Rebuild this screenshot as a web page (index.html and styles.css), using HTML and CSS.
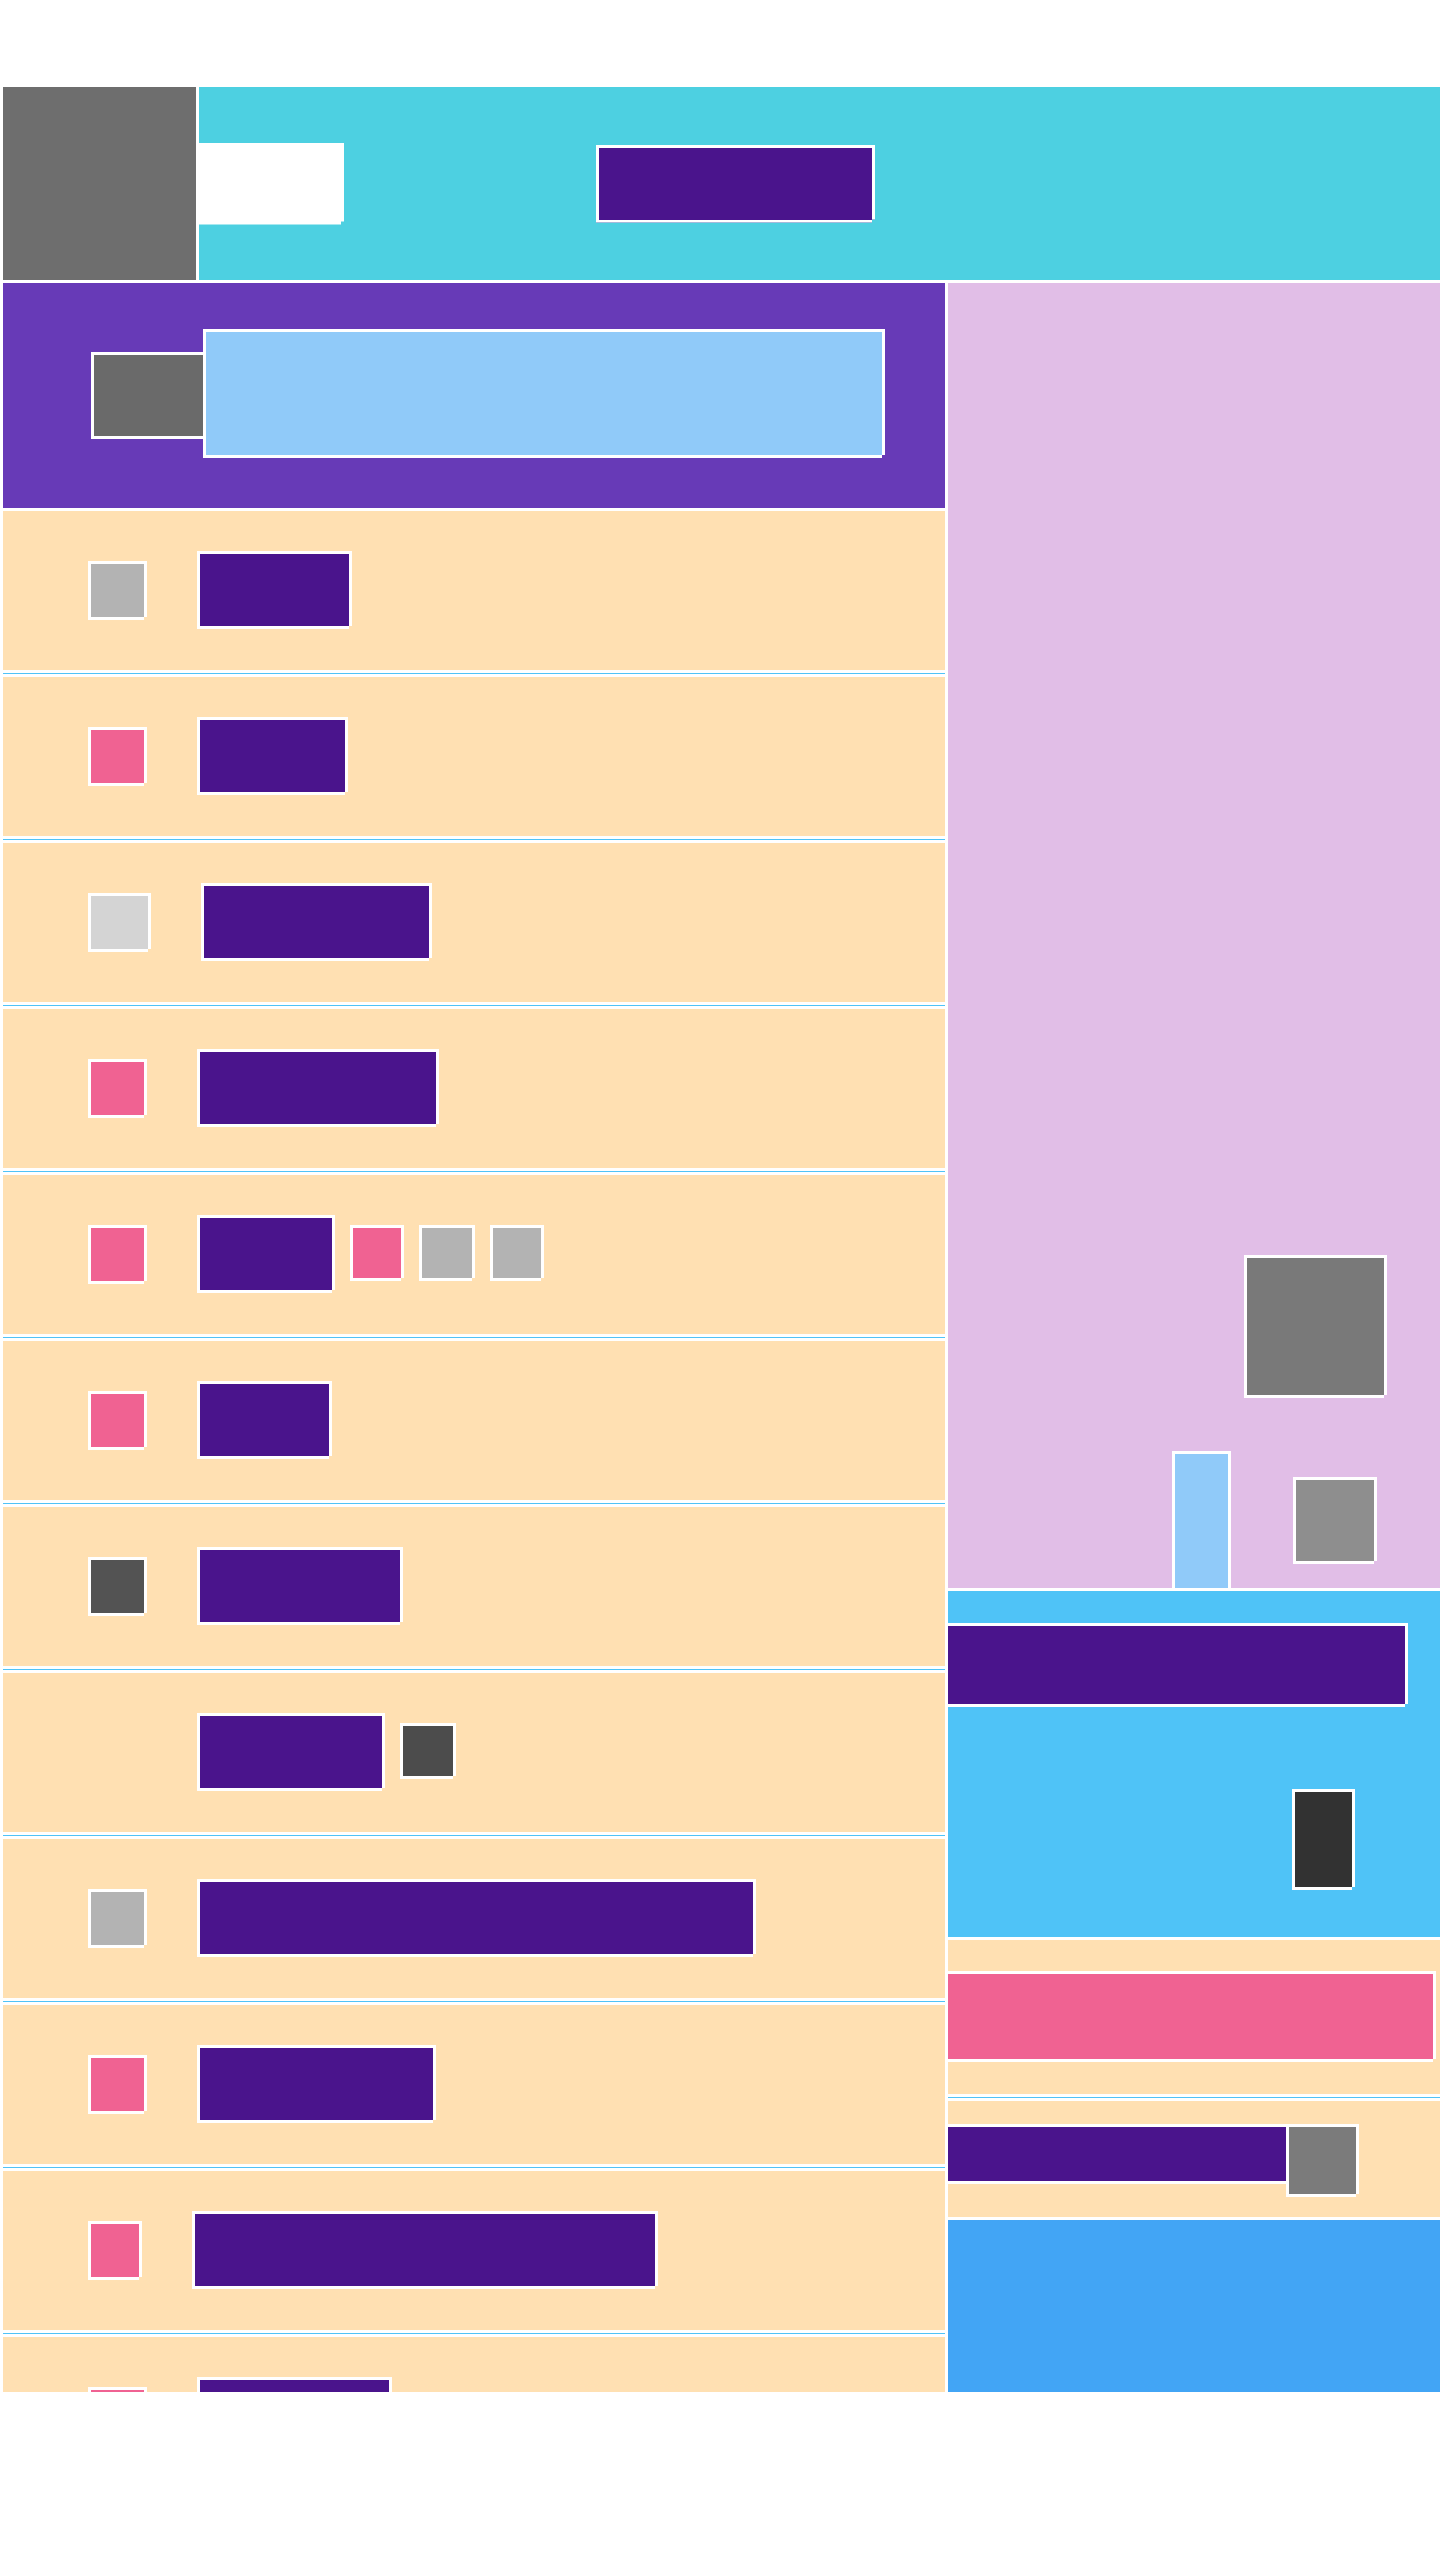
FILE: index.html
```html
<!DOCTYPE html>
<html lang="en">
<head>
<meta charset="utf-8">
<meta name="viewport" content="width=device-width, initial-scale=1">
<title>Layout blocks</title>
<link rel="stylesheet" href="styles.css">
</head>
<body>
<div class="page">
  <header class="topbar">
    <div class="topbar-logo"></div>
    <div class="topbar-body">
      <div class="topbar-tab"></div>
      <div class="box topbar-title"></div>
    </div>
  </header>
  <main class="columns">
    <section class="primary">
      <div class="banner">
        <div class="box banner-icon"></div>
        <div class="box banner-field"></div>
      </div>
      <ul class="rows">
        <li class="row"><span class="slot"><span class="box icon silver"></span></span><span class="box label" style="width:155px"></span></li>
        <li class="row"><span class="slot"><span class="box icon pink"></span></span><span class="box label" style="width:151px"></span></li>
        <li class="row"><span class="slot slot-wide"><span class="box icon icon-wide pale"></span></span><span class="box label" style="width:231px"></span></li>
        <li class="row"><span class="slot"><span class="box icon pink"></span></span><span class="box label" style="width:242px"></span></li>
        <li class="row"><span class="slot"><span class="box icon pink"></span></span><span class="box label" style="width:138px"></span><span class="extras"><span class="box badge badge-narrow pink"></span><span class="box badge silver"></span><span class="box badge badge-narrow silver"></span></span></li>
        <li class="row"><span class="slot"><span class="box icon pink"></span></span><span class="box label" style="width:135px"></span></li>
        <li class="row"><span class="slot"><span class="box icon charcoal"></span></span><span class="box label" style="width:206px"></span></li>
        <li class="row"><span class="slot"></span><span class="box label" style="width:188px"></span><span class="extras"><span class="box badge charcoal-deep"></span></span></li>
        <li class="row"><span class="slot"><span class="box icon silver"></span></span><span class="box label" style="width:559px"></span></li>
        <li class="row"><span class="slot"><span class="box icon pink"></span></span><span class="box label" style="width:239px"></span></li>
        <li class="row"><span class="slot slot-narrow"><span class="box icon icon-narrow pink"></span></span><span class="box label" style="width:466px"></span></li>
        <li class="row"><span class="slot"><span class="box icon pink"></span></span><span class="box label" style="width:195px"></span></li>
      </ul>
    </section>
    <aside class="secondary">
      <div class="stage">
        <div class="box stage-large"></div>
        <div class="stage-foot">
          <div class="stage-bar"></div>
          <div class="box stage-small"></div>
        </div>
      </div>
      <div class="panel">
        <div class="box strip panel-title"></div>
        <div class="box panel-icon"></div>
      </div>
      <div class="notice">
        <div class="box strip notice-bar"></div>
      </div>
      <div class="entry">
        <div class="box strip entry-label"></div>
        <div class="box entry-icon"></div>
      </div>
      <div class="footer-panel"></div>
    </aside>
  </main>
</div>
</body>
</html>
```
FILE: styles.css
```css
* {
  box-sizing: border-box;
}

body {
  margin: 0;
  background: #fff;
  font-family: "Liberation Sans", Arial, sans-serif;
}

.page {
  padding: 87px 0 0 3px;
}

/* Outlined block with a notch cut out of its bottom right corner */
.box {
  display: block;
  flex-shrink: 0;
  border: 3px solid #fff;
  clip-path: polygon(0 0, 100% 0, 100% calc(100% - 3px), calc(100% - 3px) calc(100% - 3px), calc(100% - 3px) 100%, 0 100%);
}

.pink { background: #f06292; }
.silver { background: #b3b3b3; }
.pale { background: #d4d4d4; }
.charcoal { background: #535353; }
.charcoal-deep { background: #4c4c4c; }

/* Top bar */
.topbar {
  display: flex;
  gap: 3px;
  height: 193px;
  margin-bottom: 3px;
}

.topbar-logo {
  flex: 0 0 193px;
  background: #6e6e6e;
}

.topbar-body {
  flex: 1;
  display: flex;
  align-items: center;
  gap: 252px;
  background: #4dd0e1;
}

.topbar-tab {
  width: 145px;
  height: 82px;
  background: #fff;
  clip-path: polygon(0 0, 100% 0, 100% calc(100% - 3px), calc(100% - 3px) calc(100% - 3px), calc(100% - 3px) 100%, 0 100%);
}

.topbar-title {
  width: 279px;
  height: 78px;
  background: #4a148c;
}

/* Two columns: the list is cut off where the side column ends */
.columns {
  display: grid;
  grid-template-columns: minmax(0, 942fr) minmax(0, 492fr);
  gap: 3px;
}

.primary {
  contain: size;
  overflow: hidden;
}

.banner {
  display: flex;
  align-items: center;
  height: 225px;
  margin-bottom: 3px;
  padding: 0 60px 0 88px;
  background: #673ab7;
}

.banner-icon {
  width: 112px;
  height: 87px;
  border-right: 0;
  clip-path: none;
  background: #6a6a6a;
}

.banner-field {
  flex: 1;
  height: 129px;
  margin-bottom: 4px;
  background: #90caf9;
}

.rows {
  margin: 0;
  padding: 0;
  list-style: none;
}

.row {
  display: flex;
  align-items: flex-start;
  height: 159px;
  padding: 40px 0 0 85px;
  background: #ffe0b2;
}

/* Divider: a thin blue line between two white ones */
.row + .row,
.entry {
  margin-top: 7px;
  box-shadow: 0 -3px #fff, 0 -4px #4fc3f7;
}

.slot {
  flex: 0 0 109px;
  padding-top: 10px;
}

.slot-wide { flex-basis: 113px; }
.slot-narrow { flex-basis: 104px; }

.icon {
  width: 59px;
  height: 59px;
}

.icon-wide { width: 63px; }
.icon-narrow { width: 54px; }

.label {
  height: 78px;
  background: #4a148c;
}

.extras {
  display: flex;
  gap: 15px;
  padding: 10px 0 0 15px;
}

.badge {
  width: 56px;
  height: 56px;
}

.badge-narrow { width: 54px; }

/* Side column */
.secondary {
  display: flex;
  flex-direction: column;
}

.strip {
  border-left: 0;
}

.stage {
  display: flex;
  flex-direction: column;
  align-items: flex-end;
  justify-content: flex-end;
  gap: 53px;
  height: 1305px;
  background: #e1bee7;
}

.stage-large {
  width: 143px;
  height: 143px;
  margin-right: 53px;
  background: #797979;
}

.stage-foot {
  display: flex;
  gap: 62px;
  padding-right: 63px;
}

.stage-bar {
  width: 59px;
  height: 137px;
  border: 3px solid #fff;
  border-bottom: 0;
  background: #90caf9;
}

.stage-small {
  width: 84px;
  height: 87px;
  margin-top: 26px;
  background: #8e8e8e;
}

.panel {
  display: flex;
  flex-direction: column;
  gap: 82px;
  height: 346px;
  margin-top: 3px;
  padding-top: 32px;
  background: #4fc3f7;
}

.panel-title {
  height: 84px;
  margin-right: 32px;
  background: #4a148c;
}

.panel-icon {
  align-self: flex-end;
  width: 63px;
  height: 101px;
  margin-right: 85px;
  background: #323232;
}

.notice {
  height: 154px;
  margin-top: 3px;
  padding: 31px 4px 0 0;
  background: #ffe0b2;
}

.notice-bar {
  height: 91px;
  background: #f06292;
}

.entry {
  display: flex;
  align-items: flex-start;
  height: 116px;
  padding: 23px 81px 0 0;
  background: #ffe0b2;
}

.entry-label {
  flex: 1;
  height: 60px;
  border-right: 0;
  clip-path: none;
  background: #4a148c;
}

.entry-icon {
  width: 73px;
  height: 73px;
  background: #7b7b7b;
}

.footer-panel {
  height: 172px;
  margin-top: 3px;
  background: #42a5f5;
}
```
